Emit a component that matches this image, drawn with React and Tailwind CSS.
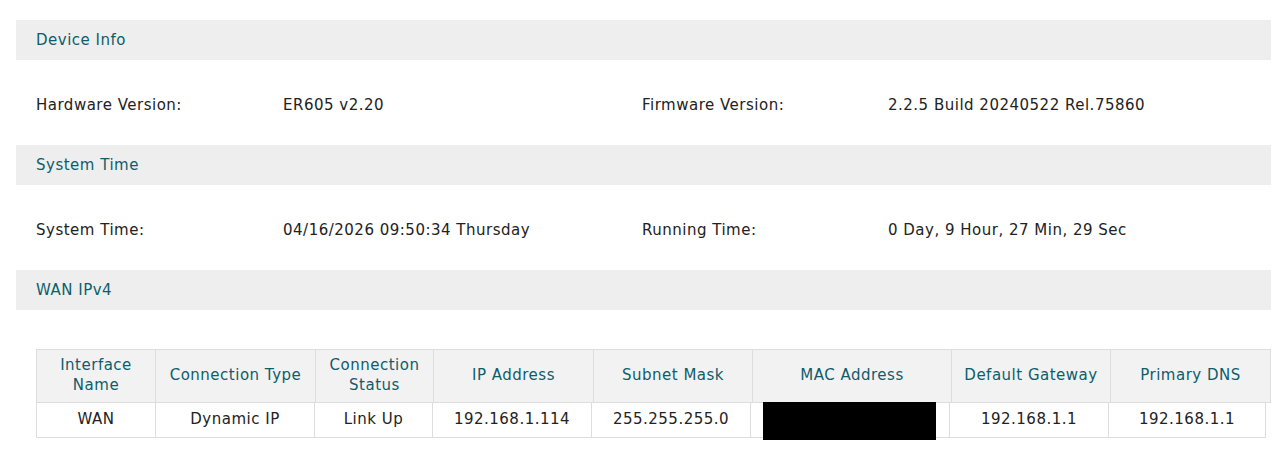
import React from "react";

const font = { fontFamily: '"DejaVu Sans", Verdana, sans-serif' };

function SectionBar({ title }) {
  return (
    <div className="h-10 bg-[#eeeeee] flex items-center pl-5 pt-[1px] text-[15px] text-[#0e5d6b]">
      {title}
    </div>
  );
}

function InfoRow({ items }) {
  return (
    <div className="h-[85px] flex items-center pt-[6px] text-[15px] text-[#222222]">
      <div className="w-[267px] pl-5">{items[0]}</div>
      <div className="w-[359px]">{items[1]}</div>
      <div className="w-[246px]">{items[2]}</div>
      <div>{items[3]}</div>
    </div>
  );
}

const headCols = [
  ["Interface", "Name", 119],
  ["Connection Type", null, 160],
  ["Connection", "Status", 118],
  ["IP Address", null, 160],
  ["Subnet Mask", null, 159],
  ["MAC Address", null, 199],
  ["Default Gateway", null, 159],
  ["Primary DNS", null, 160],
];

const bodyCols = [
  ["WAN", 119],
  ["Dynamic IP", 159],
  ["Link Up", 118],
  ["192.168.1.114", 159],
  ["255.255.255.0", 159],
  ["", 199],
  ["192.168.1.1", 159],
  ["192.168.1.1", 157],
];

export default function App() {
  return (
    <div className="bg-white w-[1280px] h-[456px] overflow-hidden tracking-[0.5px]" style={font}>
      <div className="pt-5 pl-4 w-[1271px]">
        <SectionBar title="Device Info" />
        <InfoRow items={["Hardware Version:", "ER605 v2.20", "Firmware Version:", "2.2.5 Build 20240522 Rel.75860"]} />
        <SectionBar title="System Time" />
        <InfoRow items={["System Time:", "04/16/2026 09:50:34 Thursday", "Running Time:", "0 Day, 9 Hour, 27 Min, 29 Sec"]} />
        <SectionBar title="WAN IPv4" />
        <div className="pl-5 pt-[39px]">
          <table className="table-fixed border-collapse w-[1234px] text-[15px] text-[#0e5d6b]">
            <colgroup>
              {headCols.map((c, i) => (
                <col key={i} style={{ width: c[2] }} />
              ))}
            </colgroup>
            <thead>
              <tr className="h-[53px]">
                {headCols.map((c, i) => (
                  <th key={i} className="border border-[#dddddd] bg-[#f2f2f2] font-normal text-center leading-[20px] p-0 pb-[2px]">
                    {c[0]}
                    {c[1] && <br />}
                    {c[1]}
                  </th>
                ))}
              </tr>
            </thead>
          </table>
          <div className="relative w-[1229px]">
            <table className="table-fixed border-collapse w-[1229px] text-[15px] text-[#222222]">
              <colgroup>
                {bodyCols.map((c, i) => (
                  <col key={i} style={{ width: c[1] }} />
                ))}
              </colgroup>
              <tbody>
                <tr className="h-[34px]">
                  {bodyCols.map((c, i) => (
                    <td key={i} className="border border-t-0 border-[#dddddd] text-center p-0 pb-[1px]">
                      {c[0]}
                    </td>
                  ))}
                </tr>
              </tbody>
            </table>
            {/* redacted MAC value */}
            <div className="absolute left-[727px] top-[-1px] w-[173px] h-[38px] bg-black" />
          </div>
        </div>
      </div>
    </div>
  );
}
